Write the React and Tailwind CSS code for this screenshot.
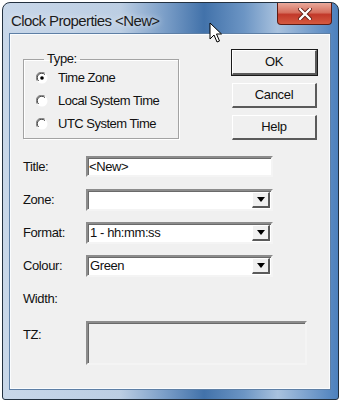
import React from 'react';

const font = { fontFamily: '"Liberation Sans", Arial, sans-serif' };

function Radio({ checked }) {
  return (
    <svg width="12" height="12" viewBox="0 0 12 12" className="shrink-0">
      <circle cx="6" cy="6" r="5.5" fill="#fff" />
      <path d="M1.2 8.5 A5.3 5.3 0 0 1 8.5 1.2" fill="none" stroke="#8a8a8a" strokeWidth="1.2" />
      <path d="M2.6 9 A4 4 0 0 1 9 2.6" fill="none" stroke="#404040" strokeWidth="1" />
      {checked && <circle cx="6" cy="6" r="1.8" fill="#000" />}
    </svg>
  );
}

function Button({ label, isDefault }) {
  return (
    <div className={`w-[85px] h-[25px] ${isDefault ? 'outline outline-1 outline-[#1a1a1a]' : ''}`}>
      <div className="w-full h-full flex items-center justify-center bg-[#f0f0f0] border-t border-l border-t-white border-l-white border-b-2 border-r-2 border-b-[#5a5a5a] border-r-[#5a5a5a] text-[13px] tracking-[-0.3px] text-[#111]">
        {label}
      </div>
    </div>
  );
}

function Sunken({ children, className = '' }) {
  return (
    <div
      className={`border-2 border-t-[#8c8c8c] border-l-[#8c8c8c] border-b-[#f4f4f4] border-r-[#f4f4f4] shadow-[inset_1px_1px_0_#6a6a6a] ${className}`}
    >
      {children}
    </div>
  );
}

function Field({ value }) {
  return (
    <Sunken className="w-[187px] h-[21px] bg-white flex items-center">
      <span className="pl-[1px] text-[13px] tracking-[-0.4px] text-[#111]">{value}</span>
    </Sunken>
  );
}

function Combo({ value }) {
  return (
    <Sunken className="w-[187px] h-[22px] bg-white flex items-stretch">
      <span className="flex-1 pl-[2px] flex items-center text-[13px] tracking-[-0.4px] text-[#111]">{value}</span>
      <div className="w-[18px] my-[1px] mr-[1px] flex items-center justify-center bg-[#f0f0f0] border-t border-l border-t-white border-l-white border-b-2 border-r-2 border-b-[#5a5a5a] border-r-[#5a5a5a]">
        <svg width="8" height="5" viewBox="0 0 8 5">
          <path d="M0 0 H8 L4 5 Z" fill="#000" />
        </svg>
      </div>
    </Sunken>
  );
}

function Row({ label, children }) {
  return (
    <div className="flex items-center h-[21px]">
      <span className="w-[63px] text-[13px] tracking-[-0.4px] text-[#111]">{label}</span>
      {children}
    </div>
  );
}

export default function App() {
  return (
    <div className="relative w-[342px] h-[404px] bg-white overflow-hidden" style={font}>
      {/* Window frame */}
      <div className="ml-[2px] mt-[2px] w-[337px] h-[398px] rounded-t-[8px] rounded-b-[3px] border border-[#22303f] bg-[linear-gradient(90deg,#c8d7e9_0%,#bccee3_35%,#7c9fc8_48%,#4272aa_60%,#6c95c4_72%,#a9c2de_82%,#4c80bd_100%)] flex flex-col">
        {/* Title bar */}
        <div className="h-[31px] flex items-start shrink-0">
          <span className="ml-[8px] mt-[7px] text-[15px] tracking-[-0.6px] text-[#1c1c1c] [text-shadow:0_0_6px_rgba(255,255,255,0.8)]">
            Clock Properties &lt;New&gt;
          </span>
          <div className="ml-auto mr-[6px] w-[55px] h-[22px] rounded-b-[4px] border border-t-0 border-[#5d1c14] bg-[linear-gradient(180deg,#e9a99b_0%,#d6705f_45%,#c2392a_55%,#d55a40_100%)] flex items-center justify-center">
            <svg width="14" height="12" viewBox="0 0 14 12">
              <path d="M2 1 L12 11 M12 1 L2 11" stroke="#5d1c14" strokeWidth="4" strokeLinecap="round" />
              <path d="M2 1 L12 11 M12 1 L2 11" stroke="#fff" strokeWidth="2.4" strokeLinecap="round" />
            </svg>
          </div>
        </div>

        {/* Client area */}
        <div className="ml-[7px] w-[320px] h-[355px] bg-[#f0f0f0] border border-[#fafcfe] shadow-[0_0_0_1px_#5e7fa5] flex flex-col text-[#111]">
          <div className="flex items-start pt-[14px] pl-[12px]">
            <fieldset className="mt-[3px] w-[156px] h-[87px] border border-[#a3a3a3] shadow-[inset_1px_1px_0_#fff,1px_1px_0_#fff] pl-[12px]">
              <legend className="ml-[8px] px-[3px] text-[13px] leading-[14px] tracking-[-0.4px]">Type:</legend>
              <div className="flex flex-col gap-[11px] mt-[6px]">
                {[
                  ['Time Zone', true],
                  ['Local System Time', false],
                  ['UTC System Time', false],
                ].map(([t, c]) => (
                  <div key={t} className="flex items-center h-[12px]">
                    <Radio checked={c} />
                    <span className="ml-[10px] text-[13px] tracking-[-0.5px] leading-[12px]">{t}</span>
                  </div>
                ))}
              </div>
            </fieldset>
            <div className="ml-[53px] flex flex-col gap-[7.5px] mt-[1px]">
              <Button label="OK" isDefault />
              <Button label="Cancel" />
              <Button label="Help" />
            </div>
          </div>

          <div className="pl-[12px] mt-[16px] flex flex-col gap-[12px]">
            <Row label="Title:">
              <Field value="<New>" />
            </Row>
            <Row label="Zone:">
              <Combo value="" />
            </Row>
            <Row label="Format:">
              <Combo value="1 - hh:mm:ss" />
            </Row>
            <Row label="Colour:">
              <Combo value="Green" />
            </Row>
            <Row label="Width:" />
            <div className="flex items-start">
              <span className="w-[63px] pt-[7px] text-[13px] tracking-[-0.4px] leading-[14px]">TZ:</span>
              <Sunken className="w-[221px] h-[44px] bg-[#f0f0f0]" />
            </div>
          </div>
        </div>
      </div>

      {/* Mouse cursor */}
      <svg className="absolute left-[209px] top-[22px]" width="14" height="22" viewBox="0 0 14 22">
        <path d="M1 1 L1 17 L5 13 L8 20 L10.5 19 L7.5 12 L12.5 12 Z" fill="#fff" stroke="#000" strokeWidth="1" strokeLinejoin="round" />
      </svg>
    </div>
  );
}
